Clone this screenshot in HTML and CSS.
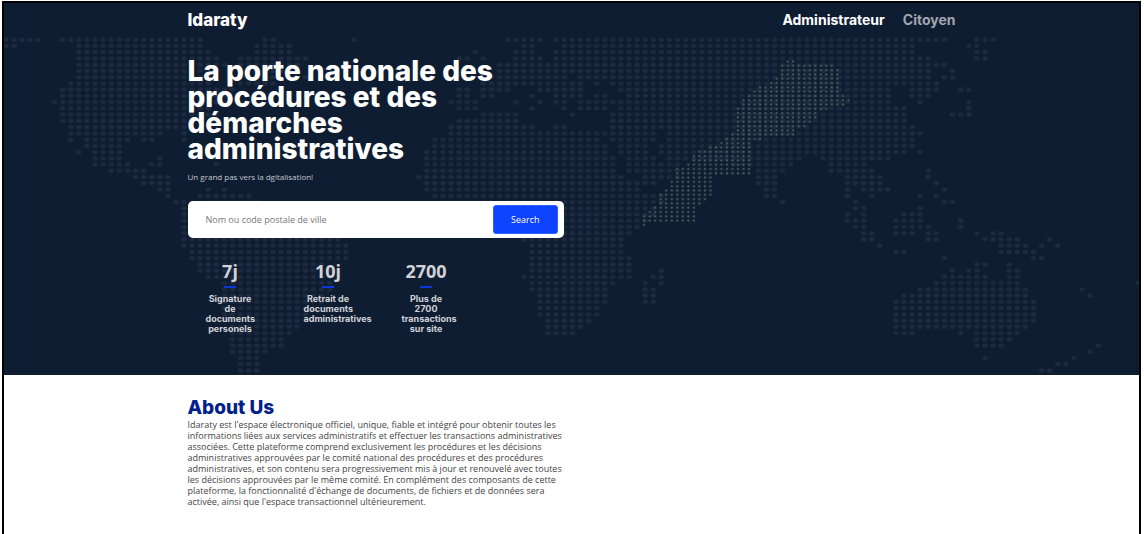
FILE: index.html
```html
<!DOCTYPE html>
<html lang="fr">
<head>
<meta charset="utf-8">
<meta name="viewport" content="width=device-width, initial-scale=1">
<title>Idaraty</title>
<link rel="stylesheet" href="styles.css">
</head>
<body>
<div class="page">
  <header class="hero">
    <svg class="hero-map" viewBox="0 0 1135 373" preserveAspectRatio="xMidYMin slice" aria-hidden="true">
      <defs>
        <pattern id="world-dot" width="1" height="1" patternUnits="userSpaceOnUse"><circle class="dot-world" cx=".5" cy=".5" r=".33"/></pattern>
        <pattern id="country-dot" width="1" height="1" patternUnits="userSpaceOnUse"><circle class="dot-country" cx=".5" cy=".5" r=".23"/></pattern>
      </defs>
      <g id="world" fill="none" stroke="url(#world-dot)" transform="translate(-2 33.6) scale(8.09 6.24)"></g>
      <g id="country" fill="none" stroke="url(#country-dot)" transform="translate(637.4 56.4) scale(5.52 4.3)"></g>
    </svg>
    <nav class="nav container" aria-label="Navigation principale">
      <a class="brand" href="#">Idaraty</a>
      <div class="nav-links">
        <a class="nav-link active" href="#">Administrateur</a>
        <a class="nav-link" href="#">Citoyen</a>
      </div>
    </nav>
    <div class="hero-content container">
      <div class="column">
        <h1 class="title">La porte nationale des procédures et des démarches administratives</h1>
        <p class="lead">Un grand pas vers la dgitalisation!</p>
        <form class="search">
          <input class="search-input" type="text" aria-label="Nom ou code postale de ville" placeholder="Nom ou code postale de ville">
          <button class="search-button" type="button">Search</button>
        </form>
        <div class="stats">
          <div class="stat"><p class="stat-value">7j</p><p class="stat-label">Signature de documents personels</p></div>
          <div class="stat"><p class="stat-value">10j</p><p class="stat-label">Retrait de documents administratives</p></div>
          <div class="stat"><p class="stat-value">2700</p><p class="stat-label">Plus de 2700 transactions sur site</p></div>
        </div>
      </div>
    </div>
  </header>
  <main class="about container">
    <div class="column">
      <h2 class="about-title">About Us</h2>
      <p class="about-text">Idaraty est l'espace électronique officiel, unique, fiable et intégré pour obtenir toutes les informations liées aux services administratifs et effectuer les transactions administratives associées. Cette plateforme comprend exclusivement les procédures et les décisions administratives approuvées par le comité national des procédures et des procédures administratives, et son contenu sera progressivement mis à jour et renouvelé avec toutes les décisions approuvées par le même comité. En complément des composants de cette plateforme, la fonctionnalité d'échange de documents, de fichiers et de données sera activée, ainsi que l'espace transactionnel ultérieurement.</p>
    </div>
  </main>
</div>
<script src="map.js"></script>
</body>
</html>
```
FILE: styles.css
```css
* { box-sizing: border-box; }
body, h1, h2, p { margin: 0; }
body {
  background: #fff;
  color: #444;
  font-family: "Open Sans", "Noto Sans", sans-serif;
  font-size: 9px;
}
.page {
  margin: 1px 3px 0 2px;
  min-height: calc(100vh - 1px);
  border: 2px solid #000;
  border-bottom: 0;
}
.container { width: 100%; max-width: 768px; margin: 0 auto; }
.column { width: 49%; min-width: 320px; }
.hero {
  position: relative;
  overflow: hidden;
  background: #0f1d33;
  color: #fff;
  padding-bottom: 41px;
}
.hero-map { position: absolute; inset: 0; width: 100%; height: 100%; }
.dot-world { fill: #1d2a40; }
.dot-country { fill: #505c57; }
.nav, .hero-content { position: relative; }
.nav {
  display: flex;
  align-items: center;
  justify-content: space-between;
  height: 33px;
  font-family: Inter, sans-serif;
  font-weight: 700;
}
.brand { color: #fff; font-size: 17px; font-weight: 800; text-decoration: none; }
.nav-links { display: flex; gap: 18px; }
.nav-link { color: #a1a6af; font-size: 14px; text-decoration: none; }
.nav-link.active { color: #fff; }
.hero-content { padding-top: 22px; }
.title {
  max-width: 340px;
  font-family: Inter, sans-serif;
  font-size: 28px;
  font-weight: 800;
  line-height: 26px;
}
.lead { margin-top: 9px; color: #c3c7cd; font-size: 8px; line-height: 12px; }
.search {
  display: flex;
  height: 37px;
  margin-top: 18px;
  padding: 4px 6px 4px 18px;
  border-radius: 5px;
  background: #fff;
}
.search-input {
  flex: 1;
  min-width: 0;
  padding: 0;
  border: 0;
  outline: 0;
  background: none;
  color: #444;
  font: inherit;
}
.search-input::placeholder { color: #777; opacity: 1; }
.search-button {
  width: 65px;
  border: 1px solid #2f63ff;
  border-radius: 3px;
  background: #0d42ff;
  color: #fff;
  font: inherit;
}
.stats { display: flex; gap: 49px; margin-top: 22px; padding-left: 18px; }
.stat {
  display: flex;
  flex-direction: column;
  align-items: center;
  width: 49px;
  color: #d0d3d8;
}
.stat-value { font-size: 18px; font-weight: 700; line-height: 22px; }
.stat-value::after {
  content: "";
  display: block;
  width: 12px;
  height: 2px;
  margin: 4px auto 6px;
  background: #0d36d8;
}
.stat-label {
  width: 100%;
  font-family: Inter, sans-serif;
  font-size: 9px;
  font-weight: 700;
  line-height: 10px;
  text-align: center;
}
.about { padding: 24px 0 28px; }
.about-title {
  color: #00208a;
  font-family: Inter, sans-serif;
  font-size: 19px;
  font-weight: 800;
  line-height: 18px;
}
.about-text { margin-top: 2px; line-height: 11px; }
```
FILE: map.js
```js
// Each entry is one row of dots, written as column ranges "first-last".
const WORLD = [
  "0-4 7-24 32-33 43 62-66 68-116 120-122", "0-1 9-24 31-35 64-65 69-112 119-120",
  "9-25 31-35 58 63-65 68-112 120-121", "9-26 29-37 56-57 59 63-66 68-114 120-121",
  "9-27 29-36 61-116", "9-26 29-36 61-114 117", "9-25 29-33 37 59-69 71-114 116-117",
  "8-25 29-33 59-71 73 75-115", "7-28 56-57 59-62 66-71 76-109 112-115 118-119",
  "7-27 56-57 59-60 65 68-71 73-74 77-109 112-114", "6-27 55-58 63 66 68-69 71-109 113 119",
  "7-25 56-58 65 69 71-74 76-111 119", "7-26 59-63 70 75-111 117-119", "7-22 56-63 75-111",
  "8-22 55-65 68-69 75-112", "8-19 22 55-80 82-113", "8 10-15 17-18 22 53-73 75-80 82-112",
  "10-14 53-74 76-79 81-112", "9 11-14 52-74 76-79 81-111 113", "11-14 19 52-75 77-80 82-98 101-109",
  "11-15 18-19 26 52-75 77-83 90-97 102-106", "13-17 52-75 77-83 93-96 102-107 114",
  "16-20 51-76 79-83 93-95 104-108 114", "17-20 52-80 93-95 104-108 115",
  "19-20 25 27 52-78 94-95 104 106-109 116", "20 24-30 53-81 94-95 104 107 113 115",
  "21-22 25-31 54-81 96 105 116-117", "22-33 60-80 105-106 113", "22-35 62-80 104 106 111-113",
  "22-37 63-79 104-106 110-113 118", "22-39 64-78 105-106 110-114 118",
  "22-40 64-77 106-107 110-112 114-115 120 122-123", "22-41 64-76 106-107 114-115 121-125 129",
  "22-42 65-76 108 123-126 128 130", "23-42 65-76 110-111 123-127", "23-42 65-77 116 127-128",
  "24-39 65-77 120-121 124", "24-40 65-77 81 117 119-120 124-125", "25-40 64-77 80-81 116-121 124-125",
  "27-40 65-75 79 81 115-125 140", "27-40 65-74 79-80 113-126 133", "27-39 66-74 79-80 111-126 134",
  "27-39 66-74 79-80 110-127", "27-38 66-73 110-127", "27-37 66-73 110-127", "27-36 67-72 110-127",
  "28-36 67-71 110-126", "28-35 67-70 110-112 118 120-125", "28-34 120-124", "28-34 120-123 135",
  "28-32 134", "29-31 121 132", "29-31 130-131", "29-31 128-129", "29-32"
];
const COUNTRY = [
  "26-27", "25-34", "25-35", "25-35", "24-35", "23-35", "21-35", "20-35", "19-36", "18-37", "18-36",
  "17-33", "17-31", "17-31", "17-30", "17-29", "17-27", "16-27", "15-21", "14-19", "12-19", "10-19",
  "9-19", "9-19", "8-19", "6-19", "6-19", "6-12", "5-12", "5-12", "4-12", "3-12", "3-11", "3-10",
  "2-9", "1-9", "0-9", "0-9", "0"
];

function drawDots(id, rows) {
  let d = "";
  rows.forEach((row, y) => {
    for (const range of row.split(" ")) {
      const [first, last = first] = range.split("-").map(Number);
      d += `M${first} ${y + 0.5}H${last + 1}`;
    }
  });
  const path = document.createElementNS("http://www.w3.org/2000/svg", "path");
  path.setAttribute("d", d);
  document.getElementById(id).append(path);
}

drawDots("world", WORLD);
drawDots("country", COUNTRY);
```
